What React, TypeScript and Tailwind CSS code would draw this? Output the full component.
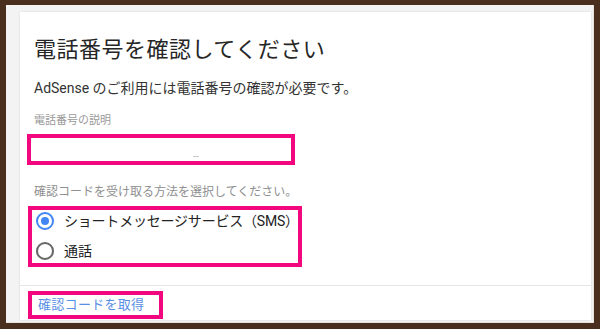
export default function App() {
  return (
    <div
      className="w-[600px] h-[329px] bg-[#4a2e1e] pt-[5px] pl-[6px] pr-[6px] pb-[6px] flex"
      style={{ fontFamily: 'Roboto, "Noto Sans CJK JP", sans-serif' }}
    >
      <div className="flex-1 flex bg-[#f3f3f3] pl-[14px] pt-[7px] pr-[2px] pb-[2px] border-r border-b border-[#e8e2dc]">
        <div className="flex-1 bg-white flex flex-col shadow-[0_0_2px_rgba(0,0,0,0.12)]">
          {/* Main content */}
          <div className="pl-[14px] pt-[23px] flex flex-col items-start">
            <h1 className="text-[22px] leading-[30px] text-[#262626] tracking-[0.5px]">
              電話番号を確認してください
            </h1>
            <p className="mt-[13px] text-[14px] leading-[20px] text-[#333333]">
              AdSense のご利用には電話番号の確認が必要です。
            </p>
            <p className="mt-[15px] text-[11px] leading-[16px] text-[#9a9a9a]">電話番号の説明</p>

            {/* Phone input (highlighted) */}
            <div className="mt-[5px] -ml-[7px] w-[268px] h-[31px] border-[4px] border-[#f2077e] bg-white flex items-end justify-center pb-[4px]">
              <div className="w-[6px] h-[1px] bg-[#c8c8c8] ml-[70px]" />
            </div>

            <p className="mt-[19px] text-[12px] leading-[16px] text-[#8f8f8f]">
              確認コードを受け取る方法を選択してください。
            </p>

            {/* Radio options (highlighted) */}
            <div className="mt-[6px] -ml-[6px] w-[274px] h-[61px] border-[4px] border-[#f2077e] pl-[4px] flex flex-col gap-[8px]">
              <label className="h-[22px] flex items-center gap-[10px]">
                <span className="w-[18px] h-[18px] rounded-full border-2 border-[#4285f4] flex items-center justify-center">
                  <span className="w-[8px] h-[8px] rounded-full bg-[#4285f4]" />
                </span>
                <span className="text-[14px] text-[#222222] tracking-[-0.2px]">ショートメッセージサービス（SMS）</span>
              </label>
              <label className="h-[22px] flex items-center gap-[10px]">
                <span className="w-[18px] h-[18px] rounded-full border-2 border-[#666666]" />
                <span className="text-[14px] text-[#222222]">通話</span>
              </label>
            </div>
          </div>

          {/* Footer */}
          <div className="mt-[18px] border-t border-[#e6e6e6] pl-[8px] pt-[5px]">
            <div className="w-[135px] h-[28px] border-[4px] border-[#f2077e] pl-[6px] flex items-center">
              <span className="text-[13px] leading-[18px] text-[#5a8fe6] tracking-[0.3px]">確認コードを取得</span>
            </div>
          </div>
        </div>
      </div>
    </div>
  );
}
